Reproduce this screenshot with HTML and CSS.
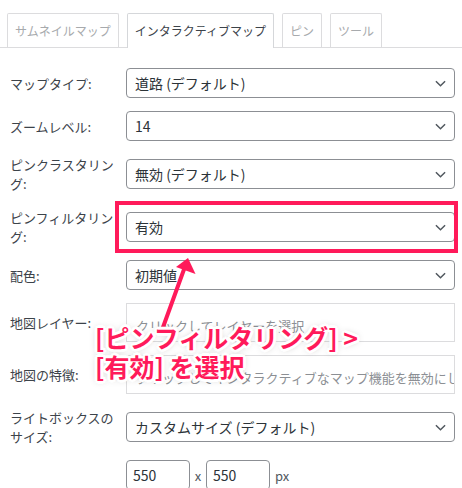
FILE: index.html
```html
<!DOCTYPE html>
<html lang="ja">
<head>
<meta charset="utf-8">
<title>インタラクティブマップ設定</title>
<link rel="stylesheet" href="styles.css">
</head>
<body>
<div class="tabs">
  <div class="tab">サムネイルマップ</div>
  <div class="tab active">インタラクティブマップ</div>
  <div class="tab">ピン</div>
  <div class="tab">ツール</div>
</div>
<div class="form">
  <div class="row">
    <div class="label">マップタイプ:</div>
    <div class="select"><span>道路 (デフォルト)</span><svg class="chev" viewBox="0 0 12 7"><polyline points="1,1 6,6 11,1"/></svg></div>
  </div>
  <div class="row">
    <div class="label">ズームレベル:</div>
    <div class="select"><span>14</span><svg class="chev" viewBox="0 0 12 7"><polyline points="1,1 6,6 11,1"/></svg></div>
  </div>
  <div class="row">
    <div class="label">ピンクラスタリング:</div>
    <div class="select"><span>無効 (デフォルト)</span><svg class="chev" viewBox="0 0 12 7"><polyline points="1,1 6,6 11,1"/></svg></div>
  </div>
  <div class="row">
    <div class="label">ピンフィルタリング:</div>
    <div class="select"><span>有効</span><svg class="chev" viewBox="0 0 12 7"><polyline points="1,1 6,6 11,1"/></svg></div>
  </div>
  <div class="row">
    <div class="label">配色:</div>
    <div class="select"><span>初期値</span><svg class="chev" viewBox="0 0 12 7"><polyline points="1,1 6,6 11,1"/></svg></div>
  </div>
  <div class="row">
    <div class="label">地図レイヤー:</div>
    <div class="multi">クリックしてレイヤーを選択</div>
  </div>
  <div class="row">
    <div class="label">地図の特徴:</div>
    <div class="multi">クリックしてインタラクティブなマップ機能を無効にします</div>
  </div>
  <div class="row">
    <div class="label">ライトボックスのサイズ:</div>
    <div class="select"><span>カスタムサイズ (デフォルト)</span><svg class="chev" viewBox="0 0 12 7"><polyline points="1,1 6,6 11,1"/></svg></div>
  </div>
  <div class="row">
    <div class="label"></div>
    <div class="sizes">
      <div class="num">550</div>
      <span class="unit">x</span>
      <div class="num">550</div>
      <span class="unit px">px</span>
    </div>
  </div>
</div>

<div class="highlight"></div>
<svg class="arrow" viewBox="0 0 462 488">
  <line x1="162" y1="330" x2="184.5" y2="268" />
  <polygon points="188,258 195.5,274 176,267" />
</svg>
<div class="callout">[ピンフィルタリング] &gt;<br>[有効] を選択</div>
</body>
</html>
```

FILE: styles.css
```css
* { box-sizing: border-box; }
html, body { margin: 0; padding: 0; background: #fff; }
body {
  width: 462px;
  height: 488px;
  overflow: hidden;
  position: relative;
  font-family: "Noto Sans CJK JP", "Noto Sans", sans-serif;
  color: #3c434a;
}
.tabs {
  display: flex;
  gap: 8px;
  padding: 13px 0 0 7px;
  height: 48px;
  border-bottom: 1px solid #dcdcde;
}
.tab {
  height: 34px;
  padding: 0 7px;
  border: 1px solid #dcdcde;
  border-bottom: none;
  border-radius: 2px 2px 0 0;
  font-size: 12px;
  line-height: 33px;
  color: #a7aaad;
  background: #fff;
  white-space: nowrap;
}
.tab.active {
  height: 35px;
  color: #3c434a;
  border-color: #d5d7da;
}
.form {
  padding-top: 14px;
}
.row {
  display: flex;
  align-items: center;
  padding: 6px 7px 7px 10px;
}
.label {
  width: 116px;
  flex: none;
  padding: 1px 8px 1px 0;
  font-size: 13px;
  line-height: 19px;
  color: #3c434a;
}
.select {
  flex: 1;
  height: 30px;
  border: 1px solid #8c8f94;
  border-radius: 4px;
  padding: 0 8px 0 8px;
  display: flex;
  align-items: center;
  justify-content: space-between;
  font-size: 14px;
  color: #2c3338;
  background: #fff;
}
.chev {
  width: 11px;
  height: 7px;
  fill: none;
  stroke: #50575e;
  stroke-width: 1.6;
  margin-top: 1px;
}
.multi {
  flex: 1;
  height: 39px;
  border: 1px solid #dcdcde;
  padding: 5px 9px 0 9px;
  display: flex;
  align-items: center;
  font-size: 13px;
  color: #8c8f94;
  white-space: nowrap;
  overflow: hidden;
}
.sizes {
  display: flex;
  align-items: center;
  gap: 0;
}
.num {
  width: 64px;
  height: 30px;
  border: 1px solid #8c8f94;
  border-radius: 4px;
  padding: 0 6px;
  display: flex;
  align-items: center;
  font-size: 14px;
  color: #2c3338;
}
.unit {
  font-size: 13px;
  color: #50575e;
  width: 16px;
  text-align: center;
}
.unit.px { width: auto; margin-left: 5px; }

.highlight {
  position: absolute;
  left: 115px;
  top: 201px;
  width: 343px;
  height: 52px;
  border: 4px solid #ff1a5a;
}
.arrow {
  position: absolute;
  left: 0;
  top: 0;
  width: 462px;
  height: 488px;
  pointer-events: none;
}
.arrow line {
  stroke: #ff1a5a;
  stroke-width: 4;
  stroke-linecap: round;
}
.arrow polygon {
  fill: #ff1a5a;
}
.callout {
  position: absolute;
  left: 95px;
  top: 323px;
  font-size: 25px;
  line-height: 29px;
  font-weight: 700;
  color: #ff1a5a;
  white-space: nowrap;
  text-shadow:
    2px 0 0 #fff, -2px 0 0 #fff, 0 2px 0 #fff, 0 -2px 0 #fff,
    2px 2px 0 #fff, -2px -2px 0 #fff, 2px -2px 0 #fff, -2px 2px 0 #fff,
    3px 0 0 #fff, -3px 0 0 #fff, 0 3px 0 #fff, 0 -3px 0 #fff,
    0 0 7px rgba(0, 0, 0, 0.35);
}
```
